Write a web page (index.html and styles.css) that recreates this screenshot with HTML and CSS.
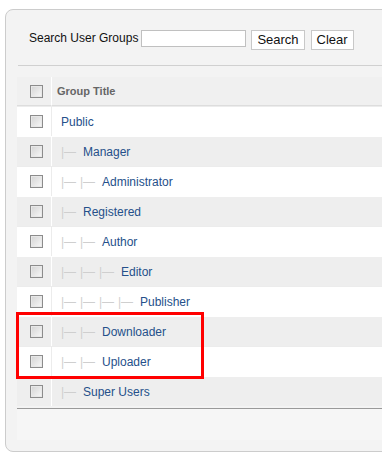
FILE: index.html
```html
<!DOCTYPE html>
<html lang="en">
<head>
    <title>User Groups</title>
    <meta charset="UTF-8">
    <link rel="stylesheet" href="styles.css">
</head>
<body>

    <!-- USER GROUPS PANEL -->
    <div class="panel">
        <div class="filter-bar">
            <label for="filter-search">Search User Groups</label>
            <input type="text" id="filter-search">
            <button>Search</button>
            <button>Clear</button>
        </div>

        <table class="adminlist">
            <thead>
                <tr>
                    <th class="check-col"><input type="checkbox"></th>
                    <th class="title-col">Group Title</th>
                </tr>
            </thead>
            <tbody>
                <tr class="row0">
                    <td class="check-col"><input type="checkbox"></td>
                    <td><a href="#">Public</a></td>
                </tr>
                <tr class="row1">
                    <td class="check-col"><input type="checkbox"></td>
                    <td><span class="gi">|&mdash;</span><a href="#">Manager</a></td>
                </tr>
                <tr class="row0">
                    <td class="check-col"><input type="checkbox"></td>
                    <td><span class="gi">|&mdash;</span><span class="gi">|&mdash;</span><a href="#">Administrator</a></td>
                </tr>
                <tr class="row1">
                    <td class="check-col"><input type="checkbox"></td>
                    <td><span class="gi">|&mdash;</span><a href="#">Registered</a></td>
                </tr>
                <tr class="row0">
                    <td class="check-col"><input type="checkbox"></td>
                    <td><span class="gi">|&mdash;</span><span class="gi">|&mdash;</span><a href="#">Author</a></td>
                </tr>
                <tr class="row1">
                    <td class="check-col"><input type="checkbox"></td>
                    <td><span class="gi">|&mdash;</span><span class="gi">|&mdash;</span><span class="gi">|&mdash;</span><a href="#">Editor</a></td>
                </tr>
                <tr class="row0">
                    <td class="check-col"><input type="checkbox"></td>
                    <td><span class="gi">|&mdash;</span><span class="gi">|&mdash;</span><span class="gi">|&mdash;</span><span class="gi">|&mdash;</span><a href="#">Publisher</a></td>
                </tr>
                <tr class="row1">
                    <td class="check-col"><input type="checkbox"></td>
                    <td><span class="gi">|&mdash;</span><span class="gi">|&mdash;</span><a href="#">Downloader</a></td>
                </tr>
                <tr class="row0">
                    <td class="check-col"><input type="checkbox"></td>
                    <td><span class="gi">|&mdash;</span><span class="gi">|&mdash;</span><a href="#">Uploader</a></td>
                </tr>
                <tr class="row1">
                    <td class="check-col"><input type="checkbox"></td>
                    <td><span class="gi">|&mdash;</span><a href="#">Super Users</a></td>
                </tr>
            </tbody>
        </table>
        <div class="list-footer"></div>
    </div>

    <!-- highlight around the new groups -->
    <div class="highlight"></div>

</body>
</html>
```

FILE: styles.css
```css
* {
    margin: 0;
    padding: 0;
    box-sizing: border-box;
}
body {
    background-color: #fff;
    font-family: "Liberation Sans", Arial, sans-serif;
    font-size: 12px;
    width: 382px;
    height: 458px;
    overflow: hidden;
    position: relative;
    padding: 9px 0 0 5px;
}
.panel {
    width: 440px;
    background-color: #f3f3f3;
    border: 1px solid #ccc;
    border-radius: 8px;
    padding: 0 0 11px 11px;
}
.filter-bar {
    display: flex;
    align-items: flex-start;
    padding: 20px 0 15px 11px;
    margin-left: 1px;
    border-bottom: 1px solid #d0d0d0;
}
.filter-bar label {
    color: #111;
    font-size: 12px;
    line-height: 16px;
    margin-right: 3px;
}
.filter-bar input {
    width: 105px;
    height: 17px;
    border: 1px solid #c0c0c0;
    background-color: #fff;
    margin-right: 5px;
}
.filter-bar button {
    height: 20px;
    padding: 0 5px;
    margin-right: 6px;
    border: 1px solid #c8c8c8;
    background-color: #fff;
    color: #111;
    font-family: "Liberation Sans", Arial, sans-serif;
    font-size: 13px;
    line-height: 18px;
}
.adminlist {
    width: 100%;
    margin-top: 11px;
    border-collapse: separate;
    border-spacing: 0;
}
.adminlist th {
    height: 29px;
    background-color: #f0f0f0;
    color: #666;
    font-size: 11px;
    text-align: left;
    border-right: 1px solid #fff;
    border-bottom: 1px solid #ddd;
}
.adminlist th.title-col {
    padding-left: 5px;
}
.adminlist td {
    height: 30px;
    border-right: 1px solid #fff;
    border-top: 1px solid #fff;
}
.adminlist .check-col {
    width: 35px;
    padding-left: 13px;
}
.adminlist td + td {
    padding-left: 9px;
}
.row0 td {
    background-color: #fff;
    border-color: #ececec;
}
.row1 td {
    background-color: #eee;
}
.adminlist td a {
    color: #25508a;
    text-decoration: none;
}
.gi {
    display: inline-block;
    width: 19px;
    color: #cfcfcf;
}
.gi + a {
    margin-left: 3px;
}
input[type="checkbox"] {
    -webkit-appearance: none;
    appearance: none;
    display: block;
    width: 13px;
    height: 13px;
    border: 1px solid #8c8c8c;
    background: linear-gradient(135deg, #d4d4d4, #f8f8f8);
    box-shadow: inset 0 0 0 1px #e8e8e8;
}
.list-footer {
    height: 32px;
    margin-top: 2px;
    border-top: 1px solid #999;
    background-color: #f6f6f6;
}
.highlight {
    position: absolute;
    left: 16px;
    top: 312px;
    width: 188px;
    height: 67px;
    border: 3px solid #f00;
}
```
